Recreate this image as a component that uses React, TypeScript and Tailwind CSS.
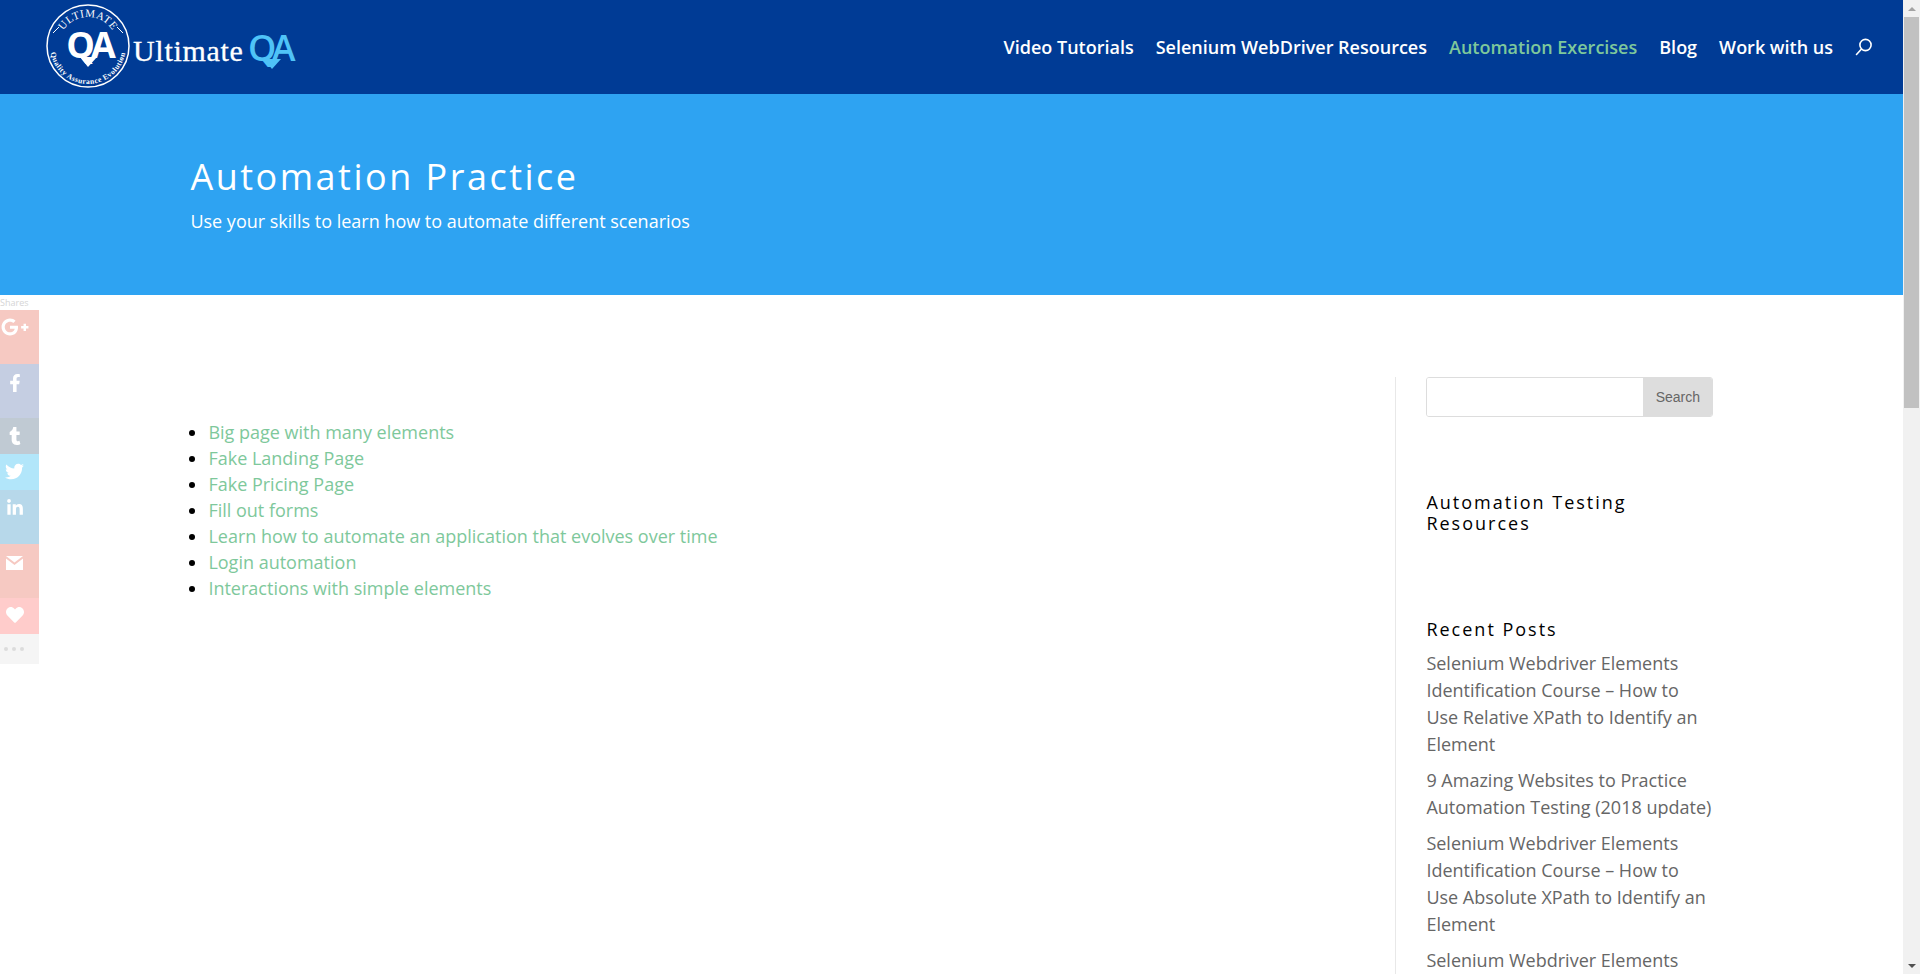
import type { ReactNode } from 'react'
import { FaGooglePlusG, FaFacebookF, FaTumblr, FaTwitter, FaLinkedinIn, FaHeart } from 'react-icons/fa'

const navItems = ['Video Tutorials', 'Selenium WebDriver Resources', 'Automation Exercises', 'Blog', 'Work with us']

const exercises = [
  'Big page with many elements',
  'Fake Landing Page',
  'Fake Pricing Page',
  'Fill out forms',
  'Learn how to automate an application that evolves over time',
  'Login automation',
  'Interactions with simple elements',
]

const posts = [
  'Selenium Webdriver Elements Identification Course – How to Use Relative XPath to Identify an Element',
  '9 Amazing Websites to Practice Automation Testing (2018 update)',
  'Selenium Webdriver Elements Identification Course – How to Use Absolute XPath to Identify an Element',
  'Selenium Webdriver Elements Identification Course – How to Use',
]

function MailIcon() {
  return (
    <svg width="17" height="14" viewBox="0 0 17 14" fill="currentColor">
      <path d="M0 0 H17 L8.5 6.5 Z" />
      <path d="M0 2.5 L8.5 9 L17 2.5 V14 H0 Z" />
    </svg>
  )
}

const shares: { icon: ReactNode; className: string }[] = [
  { icon: <FaGooglePlusG size={28} />, className: 'h-[54px] bg-[#f6c9c2] pl-[1px] pt-[3px]' },
  { icon: <FaFacebookF size={18} />, className: 'h-[54px] bg-[#c5cee2] pl-[6px] pt-[10px]' },
  { icon: <FaTumblr size={18} />, className: 'h-[36px] bg-[#c0cad3] pl-[6px] pt-[9px]' },
  { icon: <FaTwitter size={19} />, className: 'h-[36px] bg-[#b2e6fa] pl-[5px] pt-[8px]' },
  { icon: <FaLinkedinIn size={18} />, className: 'h-[54px] bg-[#b7d8ea] pl-[6px] pt-[9px]' },
  { icon: <MailIcon />, className: 'h-[54px] bg-[#f6c9c2] pl-[6px] pt-[12px]' },
  { icon: <FaHeart size={18} />, className: 'h-[36px] bg-[#ffcccb] pl-[6px] pt-[8px]' },
]

function Logo() {
  return (
    <svg width="255" height="94" viewBox="45 0 255 94" className="shrink-0">
      <defs>
        <path id="arc-top" d="M 59 46 A 29 29 0 0 1 117 46" />
        <path id="arc-bottom" d="M 50 46 A 38 38 0 0 0 126 46" />
      </defs>
      <circle cx="88" cy="46" r="41" fill="none" stroke="#fff" strokeWidth="1.5" />
      <path d="M 53 33 L 59 27 M 123 33 L 117 27" stroke="#fff" strokeWidth="1" />
      <text fontFamily="Liberation Serif, serif" fontSize="11" fill="#fff" letterSpacing="0.6">
        <textPath href="#arc-top" startOffset="50%" textAnchor="middle">ULTIMATE</textPath>
      </text>
      <text fontFamily="Liberation Serif, serif" fontWeight="700" fontSize="7.5" fill="#fff" letterSpacing="0.5">
        <textPath href="#arc-bottom" startOffset="50%" textAnchor="middle">Quality Assurance Evolution</textPath>
      </text>
      <text x="89" y="58" textAnchor="middle" fontFamily="Open Sans, sans-serif" fontWeight="700" fontSize="36" letterSpacing="-4" fill="#fff">QA</text>
      <path d="M 80 57 L 97 57 L 88 67 Z" fill="#fff" />
      <text x="133" y="61" fontFamily="Liberation Serif, serif" fontSize="30" letterSpacing="0.7" stroke="#fff" strokeWidth="0.3" fill="#fff">Ultimate</text>
      <text x="248" y="61" fontFamily="Open Sans, sans-serif" fontWeight="600" fontSize="36" letterSpacing="-4.5" fill="#4fc3f7">QA</text>
      <path d="M 264 59 L 281 59 L 272 69 Z" fill="#4fc3f7" />
    </svg>
  )
}

function ShareBar() {
  return (
    <aside className="absolute left-0 top-[295px] w-[39px]">
      <p className="h-[15px] text-[9px] leading-[15px] text-[#d5d5d5]">Shares</p>
      {shares.map((s, i) => (
        <div key={i} className={`text-white ${s.className}`}>{s.icon}</div>
      ))}
      <div className="flex h-[30px] items-center gap-[4px] bg-[#f5f5f5] pl-[4px]">
        <span className="size-[4px] rounded-full bg-[#dcdcdc]" />
        <span className="size-[4px] rounded-full bg-[#dcdcdc]" />
        <span className="size-[4px] rounded-full bg-[#dcdcdc]" />
      </div>
    </aside>
  )
}

function Scrollbar() {
  return (
    <div className="flex h-full w-[17px] shrink-0 flex-col items-center bg-[#f1f1f1]">
      <div className="flex h-[17px] items-center justify-center">
        <div className="size-0 border-x-[4px] border-b-[4px] border-x-transparent border-b-[#a3a3a3]" />
      </div>
      <div className="h-[391px] w-[15px] bg-[#c1c1c1]" />
      <div className="flex-1" />
      <div className="flex h-[17px] items-center justify-center">
        <div className="size-0 border-x-[4px] border-t-[4px] border-x-transparent border-t-[#505050]" />
      </div>
    </div>
  )
}

export default function App() {
  return (
    <div className="flex h-screen overflow-hidden bg-white font-['Open_Sans',sans-serif]">
      <div className="relative min-w-0 flex-1">
        <header className="flex h-[94px] items-center justify-between bg-[#003b95] pl-[45px] pr-[30px]">
          <Logo />
          <nav className="flex items-center gap-[22px] text-[18px] font-semibold text-white">
            {navItems.map(item => (
              <a key={item} className={item === 'Automation Exercises' ? 'text-[#7ec89b]' : ''}>{item}</a>
            ))}
            <svg width="18" height="18" viewBox="0 0 18 18" fill="none" stroke="#fff" strokeWidth="1.6">
              <circle cx="10.5" cy="7" r="5.6" />
              <path d="M6.5 11 L1.5 16.5" strokeLinecap="round" />
            </svg>
          </nav>
        </header>

        <section className="h-[201px] bg-[#2ea3f2] pl-[190.4px] pt-[60px] text-white">
          <h1 className="text-[36px] leading-[46px] tracking-[2.5px]">Automation Practice</h1>
          <p className="mt-[8px] text-[18px] leading-[27px]">Use your skills to learn how to automate different scenarios</p>
        </section>

        <ShareBar />

        <main className="flex pl-[190.4px] pt-[82px]">
          <div className="w-[1205px] pt-[42px]">
            <ul className="list-disc pl-[18px] text-[18px] leading-[26px] text-[#7ec89b] marker:text-black">
              {exercises.map(e => <li key={e}>{e}</li>)}
            </ul>
          </div>
          <div className="w-[317px] border-l border-[#e8e8e8] pl-[30px]">
            <form className="flex h-[40px] w-[287px] overflow-hidden rounded-[3px] border border-[#dddddd]">
              <input className="min-w-0 flex-1 bg-white" />
              <button type="button" className="w-[69px] bg-[#dddddd] font-['Liberation_Sans',sans-serif] text-[14px] text-[#666666]">Search</button>
            </form>
            <h4 className="mt-[75px] text-[18px] leading-[21px] tracking-[2px] text-black">Automation Testing Resources</h4>
            <h4 className="mt-[85px] text-[18px] leading-[21px] tracking-[2px] text-black">Recent Posts</h4>
            <ul className="mt-[10px] w-[287px] text-[18px] leading-[27px] text-[#666666]">
              {posts.map(p => <li key={p} className="mb-[9px]">{p}</li>)}
            </ul>
          </div>
        </main>
      </div>
      <Scrollbar />
    </div>
  )
}
